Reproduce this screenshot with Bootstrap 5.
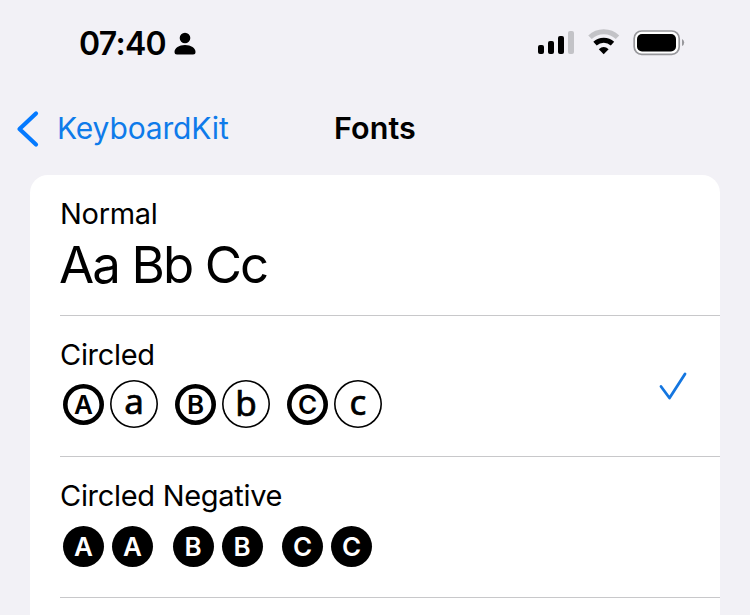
<!DOCTYPE html>
<html lang="en">
<head>
<meta charset="utf-8">
<meta name="viewport" content="width=device-width, initial-scale=1">
<title>Fonts</title>
<link href="https://cdn.jsdelivr.net/npm/bootstrap@5.3.0/dist/css/bootstrap.min.css" rel="stylesheet">
<style>
body{background:#f2f1f6;color:#000;font-family:Inter,"Liberation Sans",sans-serif;height:615px;overflow:hidden}
.status{height:88px;padding:0 65px 0 79px}
.clock{font-size:32px;font-weight:600;line-height:40px;letter-spacing:-.7px}
.indicators{margin-bottom:2px}
.topbar{height:87px;padding:0 16px 6px;display:grid;grid-template-columns:1fr auto 1fr}
.back{color:#0f7bea;font-size:30px;letter-spacing:-.15px;gap:18px}
.heading{font-size:30.5px;font-weight:600;letter-spacing:.1px}
.sheet{margin:0 30px;border-radius:18px 18px 0 0;height:440px}
.font-item{margin-left:30px;height:141px;padding-top:20px;border-bottom:1px solid #c8c8ca}
.label{font-size:29px;line-height:37px;letter-spacing:-.3px}
.sample{font-size:51px;line-height:63px;height:63px}
.plain{letter-spacing:-1.9px;line-height:65px;margin-left:-1px}
.glyphs{line-height:1;padding-left:3px}
.upper,.lower,.solid{display:flex;align-items:center;justify-content:center;border-radius:50%;flex:none}
.upper{width:41px;height:41px;box-shadow:inset 0 0 0 4.6px #000;font-size:26px;font-weight:600}
.lower{width:48px;height:48px;box-shadow:inset 0 0 0 1.6px #000;font-family:"Noto Sans",sans-serif;font-size:35px;-webkit-text-stroke:.7px #000;margin:-2px 0 0 6px}
.lower-a{padding-bottom:6px}
.lower-b{padding-bottom:2px}
.lower-c{padding-bottom:4px}
.next{margin-left:17px}
.next-solid{margin-left:19.5px}
.solid{width:41px;height:41px;background:#000;color:#fff;font-size:26px;font-weight:600}
.negative{padding-top:2px}
.tick{margin:-20px 32px 0 0}
</style>
</head>
<body>
<header class="status d-flex align-items-center justify-content-between">
  <div class="d-flex align-items-center">
    <span class="clock">07:40</span>
    <svg class="ms-2" width="22" height="24" viewBox="0 0 22 24"><circle cx="11" cy="6" r="5.3"/><path d="M0.500 20C.5 16 5 13 11 13S21.500 16 21.500 20Q21.500 22.500 19 22.500H3Q.5 22.500 .5 20Z"/></svg>
  </div>
  <svg class="indicators" width="148" height="28" viewBox="537 29 148 28">
    <rect x="538" y="45" width="6" height="9" rx="2"/><rect x="548" y="41" width="6" height="13" rx="2"/><rect x="558" y="36" width="6" height="18" rx="2"/><rect x="568" y="31" width="6" height="23" rx="2" fill="#c3c3c7"/>
    <path d="M590 37.300A19.500 19.500 0 0 1 617.500 37.300" fill="none" stroke="#c3c3c7" stroke-width="5"/>
    <path d="M595 43.600A13 13 0 0 1 612.500 43.600" fill="none" stroke="#000" stroke-width="5"/>
    <path d="M598.800 49.200Q603.700 44.800 608.600 49.200L603.700 54.300Z"/>
    <rect x="634.200" y="31" width="45" height="23.300" rx="7.500" fill="#fff" stroke="#98989c" stroke-width="1.700"/>
    <rect x="637" y="34" width="39" height="17.500" rx="5"/>
    <path d="M682 39Q684.200 40 684.200 42.500T682 46Z" fill="#98989c"/>
  </svg>
</header>
<nav class="topbar align-items-center">
  <a href="#" class="back d-flex align-items-center text-decoration-none">
    <svg width="23" height="38" viewBox="0 0 23 38" fill="none" stroke="#057aff" stroke-width="4.200" stroke-linecap="round" stroke-linejoin="round"><path d="M20 3.500L3.500 19L20 34.500"/></svg>
    <span>KeyboardKit</span>
  </a>
  <h1 class="heading m-0">Fonts</h1>
</nav>
<main class="sheet bg-white">
  <section class="font-item"><div class="label">Normal</div><div class="sample plain">Aa Bb Cc</div></section>
  <section class="font-item d-flex justify-content-between">
    <div>
      <div class="label">Circled</div>
      <div class="sample glyphs d-flex align-items-center">
        <span class="upper">A</span><span class="lower lower-a">a</span>
        <span class="upper next">B</span><span class="lower lower-b">b</span>
        <span class="upper next">C</span><span class="lower lower-c">c</span>
      </div>
    </div>
    <svg class="tick align-self-center" width="30" height="30" viewBox="0 0 30 30" fill="none" stroke="#1476e0" stroke-width="2.800" stroke-linecap="round" stroke-linejoin="round"><path d="M3 15.500L11.500 27L27 3"/></svg>
  </section>
  <section class="font-item">
    <div class="label">Circled Negative</div>
    <div class="sample glyphs negative d-flex align-items-center">
      <span class="solid me-2">A</span><span class="solid">A</span>
      <span class="solid next-solid me-2">B</span><span class="solid">B</span>
      <span class="solid next-solid me-2">C</span><span class="solid">C</span>
    </div>
  </section>
</main>
<script src="https://cdn.jsdelivr.net/npm/bootstrap@5.3.0/dist/js/bootstrap.bundle.min.js"></script>
</body>
</html>
